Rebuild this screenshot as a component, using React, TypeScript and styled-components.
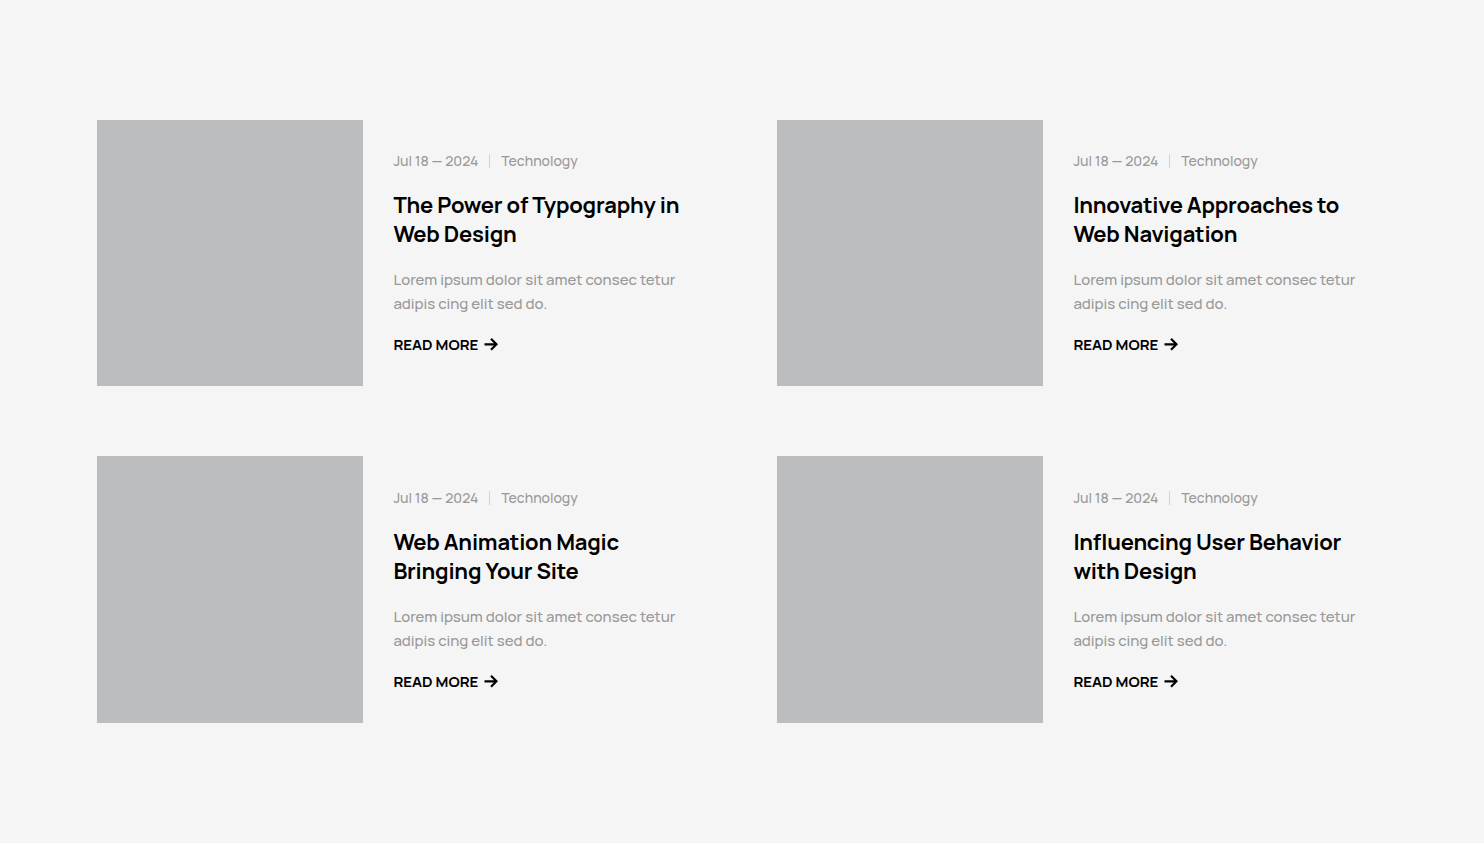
import React from "react";
import styled, { createGlobalStyle } from "styled-components";

const GlobalStyle = createGlobalStyle`
  * { box-sizing: border-box; }
  body {
    margin: 0;
    background: #f5f5f5;
    color: #000;
    font-family: Manrope, Inter, "Liberation Sans", sans-serif;
  }
`;

const Section = styled.main`
  padding: 120px 24px;
`;

const Grid = styled.div`
  display: grid;
  grid-template-columns: repeat(2, minmax(0, 1fr));
  gap: 70px;
  max-width: 1290px;
  margin: 0 auto;

  @media (max-width: 1100px) {
    grid-template-columns: minmax(0, 1fr);
  }
`;

const Card = styled.article`
  display: flex;
  align-items: center;
  gap: 30px;
`;

const Thumbnail = styled.div`
  flex: 0 0 43.67%;
  aspect-ratio: 1;
  background: #bcbdbf;
`;

const Body = styled.div`
  flex: 1;
  min-width: 0;
`;

const Meta = styled.div`
  display: flex;
  align-items: center;
  margin-bottom: 19px;
  color: #999;
  font-size: 14px;
  font-weight: 500;
  line-height: 22px;
`;

const Category = styled.span`
  display: flex;
  align-items: center;

  &::before {
    content: "";
    width: 1px;
    height: 14px;
    margin: 0 11px;
    background: #d4d4d4;
  }
`;

const Title = styled.h2`
  max-width: 290px;
  margin: 0 0 19px;
  font-size: 22px;
  font-weight: 700;
  line-height: 29px;
  letter-spacing: -0.01em;
`;

const Excerpt = styled.p`
  max-width: 290px;
  margin: 0 0 18px;
  color: #999;
  font-size: 15px;
  font-weight: 500;
  line-height: 24px;
`;

const ReadMore = styled.a`
  display: inline-flex;
  align-items: center;
  gap: 6px;
  color: #000;
  font-size: 15px;
  font-weight: 700;
  line-height: 22px;
  text-decoration: none;
  text-transform: uppercase;
  vertical-align: top;
`;

const Arrow = () => (
  <svg width="14" height="14" viewBox="0 0 14 14" fill="none" stroke="currentColor" strokeWidth="2.2" aria-hidden="true">
    <path d="M0.5 6.3H12.3M7 0.8L12.5 6.3L7 11.8" />
  </svg>
);

const posts = [
  "The Power of Typography in Web Design",
  "Innovative Approaches to Web Navigation",
  "Web Animation Magic Bringing Your Site",
  "Influencing User Behavior with Design",
];

export default function App() {
  return (
    <>
      <GlobalStyle />
      <Section>
        <Grid>
          {posts.map((title) => (
            <Card key={title}>
              <Thumbnail />
              <Body>
                <Meta>
                  <time dateTime="2024-07-18">Jul 18 — 2024</time>
                  <Category>Technology</Category>
                </Meta>
                <Title>{title}</Title>
                <Excerpt>Lorem ipsum dolor sit amet consec tetur adipis cing elit sed do.</Excerpt>
                <ReadMore href="#">
                  Read more
                  <Arrow />
                </ReadMore>
              </Body>
            </Card>
          ))}
        </Grid>
      </Section>
    </>
  );
}
